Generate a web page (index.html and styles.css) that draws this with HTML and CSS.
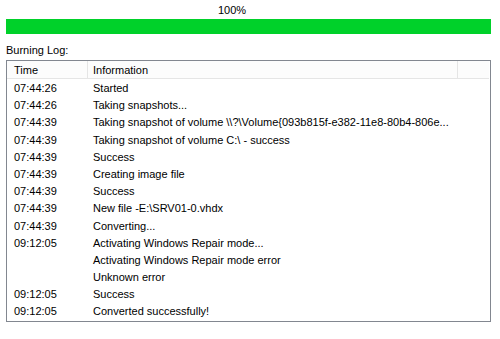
FILE: index.html
```html
<!DOCTYPE html>
<html lang="en">
<head>
    <meta charset="UTF-8">
    <title>Burning Log</title>
    <link rel="stylesheet" href="styles.css">
</head>
<body>
    <!-- progress -->
    <div class="progress">
        <div class="progress-label">100%</div>
        <div class="progress-track">
            <div class="progress-fill" style="width: 100%"></div>
        </div>
    </div>

    <!-- log list -->
    <div class="log-title">Burning Log:</div>
    <div class="log-box">
        <div class="log-header">
            <div class="col-time">Time</div>
            <div class="col-info">Information</div>
            <div class="col-rest"></div>
        </div>
        <div class="log-rows">
            <div class="log-row"><span class="col-time">07:44:26</span><span class="col-info">Started</span></div>
            <div class="log-row"><span class="col-time">07:44:26</span><span class="col-info">Taking snapshots...</span></div>
            <div class="log-row"><span class="col-time">07:44:39</span><span class="col-info">Taking snapshot of volume \\?\Volume{093b815f-e382-11e8-80b4-806e...</span></div>
            <div class="log-row"><span class="col-time">07:44:39</span><span class="col-info">Taking snapshot of volume C:\ - success</span></div>
            <div class="log-row"><span class="col-time">07:44:39</span><span class="col-info">Success</span></div>
            <div class="log-row"><span class="col-time">07:44:39</span><span class="col-info">Creating image file</span></div>
            <div class="log-row"><span class="col-time">07:44:39</span><span class="col-info">Success</span></div>
            <div class="log-row"><span class="col-time">07:44:39</span><span class="col-info">New file -E:\SRV01-0.vhdx</span></div>
            <div class="log-row"><span class="col-time">07:44:39</span><span class="col-info">Converting...</span></div>
            <div class="log-row"><span class="col-time">09:12:05</span><span class="col-info">Activating Windows Repair mode...</span></div>
            <div class="log-row"><span class="col-time"></span><span class="col-info">Activating Windows Repair mode error</span></div>
            <div class="log-row"><span class="col-time"></span><span class="col-info">Unknown error</span></div>
            <div class="log-row"><span class="col-time">09:12:05</span><span class="col-info">Success</span></div>
            <div class="log-row"><span class="col-time">09:12:05</span><span class="col-info">Converted successfully!</span></div>
        </div>
    </div>
</body>
</html>
```

FILE: styles.css
```css
/* general */
body {
    font-family: 'Liberation Sans', Arial, sans-serif;
    font-size: 11px;
    color: #000;
    background: #fff;
    margin: 0;
    padding: 0 9px 0 6px;
}

* {
    box-sizing: border-box;
}

/* progress */
.progress-label {
    height: 19px;
    line-height: 20px;
    padding-right: 33px;
    text-align: center;
}

.progress-track {
    height: 15px;
    background: #e6e6e6;
}

.progress-fill {
    height: 100%;
    background: #00d12a;
}

/* log */
.log-title {
    margin-top: 9px;
    height: 17px;
    line-height: 15px;
}

.log-box {
    border: 1px solid #828790;
    height: 262px;
}

.log-header {
    display: flex;
    height: 18px;
    line-height: 18px;
    background: #fcfcfc;
    border-bottom: 1px solid #e5e5e5;
    margin-right: 1px;
}

.log-header > div {
    border-right: 1px solid #e5e5e5;
}

.log-header .col-rest {
    flex: 1;
    border-right: none;
}

.col-time {
    width: 81px;
    padding-left: 7px;
    flex-shrink: 0;
}

.col-info {
    width: 370px;
    padding-left: 5px;
    flex-shrink: 0;
    white-space: nowrap;
    overflow: hidden;
}

.log-rows {
    padding-top: 1px;
}

.log-row {
    display: flex;
    height: 17.2px;
    line-height: 17.2px;
}
```
